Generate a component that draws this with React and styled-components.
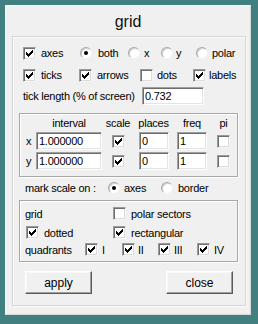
import React from "react";
import styled, { createGlobalStyle } from "styled-components";

const GlobalStyle = createGlobalStyle`
  html, body { margin: 0; padding: 0; }
  body {
    background: #408080;
    font-family: "Liberation Sans", Arial, sans-serif;
    font-size: 11px;
    letter-spacing: -0.25px;
    color: #000;
  }
`;

const Page = styled.div`
  padding: 5px 0 0 5px;
`;

const Window = styled.div`
  box-sizing: border-box;
  width: 246px;
  height: 310px;
  background: #f0f0f0;
  border: 1px solid;
  border-color: #f8f8f8 #d8d8d8 #d8d8d8 #f8f8f8;
  display: flex;
  flex-direction: column;
`;

const Title = styled.div`
  height: 30px;
  line-height: 31px;
  text-align: center;
  font-size: 16px;
  letter-spacing: 0;
  color: #111;
`;

const Panel = styled.div`
  box-sizing: border-box;
  margin-left: 6px;
  width: 234px;
  height: 270px;
  border: 1px solid #d6d6d6;
  box-shadow: inset 1px 1px 0 #fbfbfb, 1px 1px 0 #fbfbfb;
  display: flex;
  flex-direction: column;
`;

const Row = styled.div`
  display: flex;
  align-items: center;
  height: ${(p) => p.$h || 16}px;
  margin-top: ${(p) => p.$mt || 0}px;
  padding-left: ${(p) => p.$pl || 0}px;
  white-space: nowrap;
`;

const Item = styled.div`
  display: flex;
  align-items: center;
  gap: ${(p) => (p.$gap == null ? 5 : p.$gap)}px;
  width: ${(p) => (p.$w ? `${p.$w}px` : "auto")};
  margin-left: ${(p) => p.$ml || 0}px;
  flex: none;
`;

const Box = styled.span`
  box-sizing: border-box;
  width: 13px;
  height: 13px;
  flex: none;
  background: #fff;
  border: 1px solid;
  border-color: #9a9a9a #f4f4f4 #f4f4f4 #9a9a9a;
  box-shadow: inset 1px 1px 0 #707070, inset -1px -1px 0 #dcdcdc;
  display: flex;
  align-items: center;
  justify-content: center;
  justify-self: start;
  margin-left: ${(p) => p.$ml || 0}px;
`;

const Round = styled.span`
  box-sizing: border-box;
  width: 12px;
  height: 12px;
  flex: none;
  border-radius: 50%;
  background: #fff;
  border: 1px solid;
  border-color: #a8a8a8 #f2f2f2 #f2f2f2 #a8a8a8;
  box-shadow: inset 1px 1px 0 #cfcfcf;
  display: flex;
  align-items: center;
  justify-content: center;
`;

const Dot = styled.span`
  width: 4px;
  height: 4px;
  border-radius: 50%;
  background: #000;
`;

const Field = styled.input`
  box-sizing: border-box;
  width: ${(p) => p.$w}px;
  height: 18px;
  margin: 0;
  padding: 0 0 0 2px;
  font: inherit;
  font-size: 11px;
  letter-spacing: -0.25px;
  color: #000;
  background: #fff;
  border: 1px solid;
  border-color: #a0a0a0 #fdfdfd #fdfdfd #a0a0a0;
  box-shadow: inset 1px 1px 0 #6c6c6c, inset -1px -1px 0 #e4e4e4;
  outline: none;
  justify-self: ${(p) => p.$js || "start"};
`;

const GroupBox = styled.div`
  box-sizing: border-box;
  margin-left: 6px;
  width: 219px;
  height: ${(p) => p.$h}px;
  margin-top: ${(p) => p.$mt}px;
  border: 1px solid #a8a8a8;
  box-shadow: inset 1px 1px 0 #fff, 1px 1px 0 #fff;
  padding: ${(p) => p.$pad};
  display: flex;
  flex-direction: column;
`;

const TableGrid = styled.div`
  display: grid;
  grid-template-columns: 16px 66px 32px 35px 38px 29px;
  grid-template-rows: 15px 18px 18px;
  row-gap: 2px;
  align-items: center;
`;

const Head = styled.div`
  text-align: center;
  padding-left: ${(p) => p.$pl || 0}px;
`;

const Axis = styled.div`
  padding-left: 6px;
`;

const Buttons = styled.div`
  display: flex;
  justify-content: space-between;
  padding: 0 12px;
  margin-top: 9px;
`;

const Button = styled.div`
  box-sizing: border-box;
  width: 67px;
  height: 23px;
  display: flex;
  align-items: center;
  justify-content: center;
  font-size: 12px;
  letter-spacing: 0;
  background: #f0f0f0;
  border: 1px solid;
  border-color: #fff #5a5a5a #5a5a5a #fff;
  box-shadow: inset -1px -1px 0 #a0a0a0, inset 1px 1px 0 #f8f8f8;
`;

const CheckMark = () => (
  <svg width="7" height="7" viewBox="0 0 7 7" shapeRendering="crispEdges">
    {[2, 3, 4, 3, 2, 1, 0].map((y, i) => (
      <rect key={i} x={i} y={y} width="1" height="3" fill="#000" />
    ))}
  </svg>
);

const Check = ({ on, ml }) => <Box $ml={ml}>{on && <CheckMark />}</Box>;

const Radio = ({ on }) => <Round>{on && <Dot />}</Round>;

const CheckItem = ({ on, label, w, gap, ml }) => (
  <Item $w={w} $gap={gap} $ml={ml}>
    <Check on={on} />
    <span>{label}</span>
  </Item>
);

const RadioItem = ({ on, label, w, gap }) => (
  <Item $w={w} $gap={gap}>
    <Radio on={on} />
    <span>{label}</span>
  </Item>
);

export default function App() {
  return (
    <>
      <GlobalStyle />
      <Page>
        <Window>
          <Title>grid</Title>
          <Panel>
            <Row $mt={8} $pl={10}>
              <CheckItem on label="axes" w={57} />
              <RadioItem on label="both" w={48} gap={6} />
              <RadioItem label="x" w={33} gap={4} />
              <RadioItem label="y" w={35} gap={3} />
              <RadioItem label="polar" gap={4} />
            </Row>
            <Row $mt={6} $pl={10}>
              <CheckItem on label="ticks" w={56} />
              <CheckItem on label="arrows" w={61} />
              <CheckItem label="dots" w={53} gap={4} />
              <CheckItem on label="labels" gap={3} />
            </Row>
            <Row $mt={4} $pl={10} $h={18}>
              <Item $w={119}>tick length (% of screen)</Item>
              <Field $w={62} readOnly value="0.732" />
            </Row>
            <GroupBox $h={64} $mt={8} $pad="1px 0 0 0">
              <TableGrid>
                <div />
                <Head>interval</Head>
                <Head>scale</Head>
                <Head $pl={4}>places</Head>
                <Head $pl={8}>freq</Head>
                <Head $pl={4}>pi</Head>

                <Axis>x</Axis>
                <Field $w={66} readOnly value="1.000000" />
                <Check on ml={10} />
                <Field $w={30} $js="end" readOnly value="0" />
                <Field $w={30} $js="end" readOnly value="1" />
                <Check ml={10} />

                <Axis>y</Axis>
                <Field $w={66} readOnly value="1.000000" />
                <Check on ml={10} />
                <Field $w={30} $js="end" readOnly value="0" />
                <Field $w={30} $js="end" readOnly value="1" />
                <Check ml={10} />
              </TableGrid>
            </GroupBox>
            <Row $mt={3} $pl={12}>
              <Item $w={83}>mark scale on :</Item>
              <RadioItem on label="axes" w={53} gap={4} />
              <RadioItem label="border" gap={5} />
            </Row>
            <GroupBox $h={62} $mt={4} $pad="6px 0 0 5px">
              <Row $h={13}>
                <Item $w={88}>grid</Item>
                <CheckItem label="polar sectors" />
              </Row>
              <Row $h={13} $mt={6}>
                <CheckItem on label="dotted" w={88} ml={1} />
                <CheckItem on label="rectangular" ml={-1} />
              </Row>
              <Row $h={13} $mt={4}>
                <Item $w={60}>quadrants</Item>
                <CheckItem on label="I" w={37} gap={4} />
                <CheckItem on label="II" w={36} gap={3} />
                <CheckItem on label="III" w={39} gap={3} />
                <CheckItem on label="IV" gap={4} />
              </Row>
            </GroupBox>
            <Buttons>
              <Button>apply</Button>
              <Button>close</Button>
            </Buttons>
          </Panel>
        </Window>
      </Page>
    </>
  );
}
